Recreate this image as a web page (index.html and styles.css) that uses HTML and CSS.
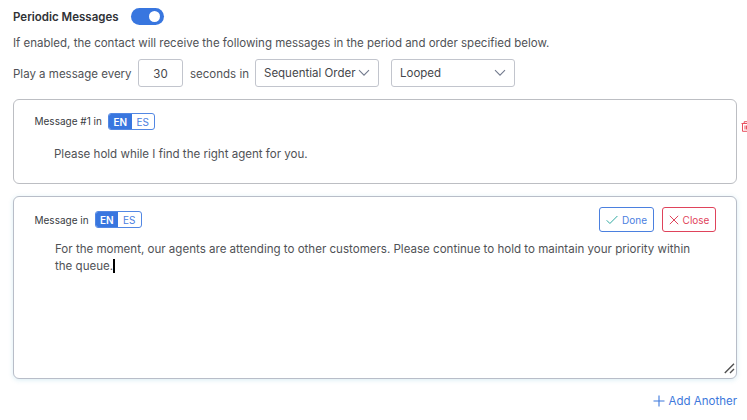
FILE: index.html
```html
<!DOCTYPE html>
<html lang="en">
<head>
<meta charset="utf-8">
<title>Periodic Messages</title>
<link rel="stylesheet" href="styles.css">
</head>
<body>
<main class="panel">
  <header class="heading">
    <h1 class="title">Periodic Messages</h1>
    <span class="toggle" role="switch" aria-checked="true"><span class="knob"></span></span>
  </header>
  <p class="description">If enabled, the contact will receive the following messages in the period and order specified below.</p>
  <div class="settings">
    <span class="play-label">Play a message every</span>
    <span class="field period">30</span>
    <span class="seconds-label">seconds in</span>
    <span class="field select order"><span class="order-text">Sequential Order</span>
      <svg class="chevron" viewBox="0 0 12 8"><path d="M1 1.2l5 5 5-5"/></svg>
    </span>
    <span class="field select loop"><span class="loop-text">Looped</span>
      <svg class="chevron" viewBox="0 0 12 8"><path d="M1 1.2l5 5 5-5"/></svg>
    </span>
  </div>
  <section class="card saved">
    <div class="card-head">
      <span class="card-label first-label">Message #1 in</span>
      <span class="langs"><b class="lang active">EN</b><span class="lang">ES</span></span>
    </div>
    <p class="message saved-message">Please hold while I find the right agent for you.</p>
    <svg class="trash" viewBox="0 0 11 11"><path d="M.5 2.5h10M3.2 2.5V.7h4.6v1.8M1.5 2.5v7.8h8V2.5M4 4.5v4M5.5 4.5v4M7 4.5v4"/></svg>
  </section>
  <section class="card editing">
    <div class="card-head">
      <span class="card-label second-label">Message in</span>
      <span class="langs"><b class="lang active">EN</b><span class="lang">ES</span></span>
      <span class="actions">
        <span class="button done"><svg class="check" viewBox="0 0 12 10"><path d="M.7 5.3l3.2 3.2L11.4 1"/></svg><span>Done</span></span>
        <span class="button close"><svg class="cross" viewBox="0 0 10 10"><path d="M.8.8l8.4 8.4M9.2.8L.8 9.2"/></svg><span>Close</span></span>
      </span>
    </div>
    <p class="message draft"><span class="line-one">For the moment, our agents are attending to other customers. Please continue to hold to maintain your priority within</span><br><span class="line-two">the queue.</span><span class="caret"></span></p>
    <svg class="grip" viewBox="0 0 11 11"><path d="M.8 10L10 .8M6 10l4-4"/></svg>
  </section>
  <footer class="add">
    <svg class="plus" viewBox="0 0 12 12"><path d="M6 .5v11M.5 6h11"/></svg><span>Add Another</span>
  </footer>
</main>
</body>
</html>
```
FILE: styles.css
```css
* { box-sizing: border-box; }
body {
  margin: 0;
  background: #fff;
  color: #505256;
  font: 11.51px/16px Inter, "Liberation Sans", sans-serif;
  white-space: nowrap;
  overflow: hidden;
}
svg { display: block; fill: none; flex: none; }
p, h1 { margin: 0; }
.panel { width: 724px; margin-left: 13px; padding-top: 8px; }
.heading { display: flex; align-items: center; gap: 12px; height: 17px; }
.title { width: 105.5px; font-size: 11.5px; font-weight: 600; color: #303236; }
.toggle {
  display: flex; align-items: center; justify-content: flex-end;
  width: 33px; height: 17px; padding-right: 4px;
  border-radius: 9px; background: #3876df;
}
.knob { width: 11px; height: 11px; border-radius: 50%; background: #fff; }
.description { margin-top: 10px; height: 16px; }
.settings { display: flex; align-items: center; height: 28px; margin-top: 8px; }
.play-label { width: 125px; padding-top: 1px; }
.field {
  display: flex; align-items: center; height: 28px;
  border: 1px solid #c2c5cd; border-radius: 3px; color: #45474b;
}
.period { width: 45px; justify-content: center; padding-top: 1px; }
.seconds-label { width: 65px; margin-left: 7px; padding-top: 1px; }
.select { width: 124px; padding: 0 8px; justify-content: space-between; }
.loop { margin-left: 12px; }
.chevron { width: 12px; height: 8px; stroke: #737b8e; stroke-width: 1.1; }
.card { position: relative; border: 1px solid #bcbec3; border-radius: 6px; background: #fff; }
.saved { height: 85px; margin-top: 12px; padding: 13px 20px; }
.editing {
  height: 183px; margin-top: 12px; padding: 10px 20px;
  border-color: #b8bdc8; box-shadow: 0 1px 5px rgba(40, 150, 190, .18);
}
.card-head { display: flex; align-items: center; font-size: 10px; color: #393b3f; }
.saved .card-head { height: 17px; }
.editing .card-head { height: 25px; }
.first-label { width: 74px; padding: 0 0 1px .5px; }
.second-label { width: 60.5px; padding-left: .5px; }
.langs {
  display: flex; width: 47px; height: 17px; border: 1px solid #5287e3;
  border-radius: 3px; overflow: hidden;
}
.lang { flex: 1; line-height: 16px; text-align: center; font-size: 10px; color: #4b80df; }
.active { background: #3876df; color: #fff; font-weight: 600; }
.message { font-size: 11.56px; }
.saved-message { margin: 16px 0 0 20px; }
.draft { margin: 9px 0 0 21px; line-height: 17px; }
.line-two { line-height: 16px; }
.caret { display: inline-block; width: 1.5px; height: 14px; margin-left: 0; background: #000; vertical-align: -3px; }
.trash { position: absolute; left: 727px; top: 21px; width: 11px; height: 11px; stroke: #e8505f; }
.actions { display: flex; gap: 8px; margin-left: auto; }
.button {
  display: flex; align-items: center; justify-content: center; gap: 4px;
  height: 25px; border: 1px solid #4b80df; border-radius: 3px;
  color: #4b80df; font-size: 10px;
}
.done { width: 55px; }
.close { width: 54px; color: #df435b; border-color: #df435b; }
.check { width: 12px; height: 10px; stroke: #2fa8a0; }
.cross { width: 10px; height: 10px; stroke: #df435b; }
.grip { position: absolute; right: 1px; bottom: 4px; width: 11px; height: 11px; stroke: #505050; stroke-width: 1.4; }
.add { display: flex; align-items: center; justify-content: flex-end; gap: 4px; height: 16px; margin-top: 14px; color: #3d78dc; }
.plus { width: 12px; height: 12px; stroke: #3d78dc; stroke-width: 1.1; }
```
